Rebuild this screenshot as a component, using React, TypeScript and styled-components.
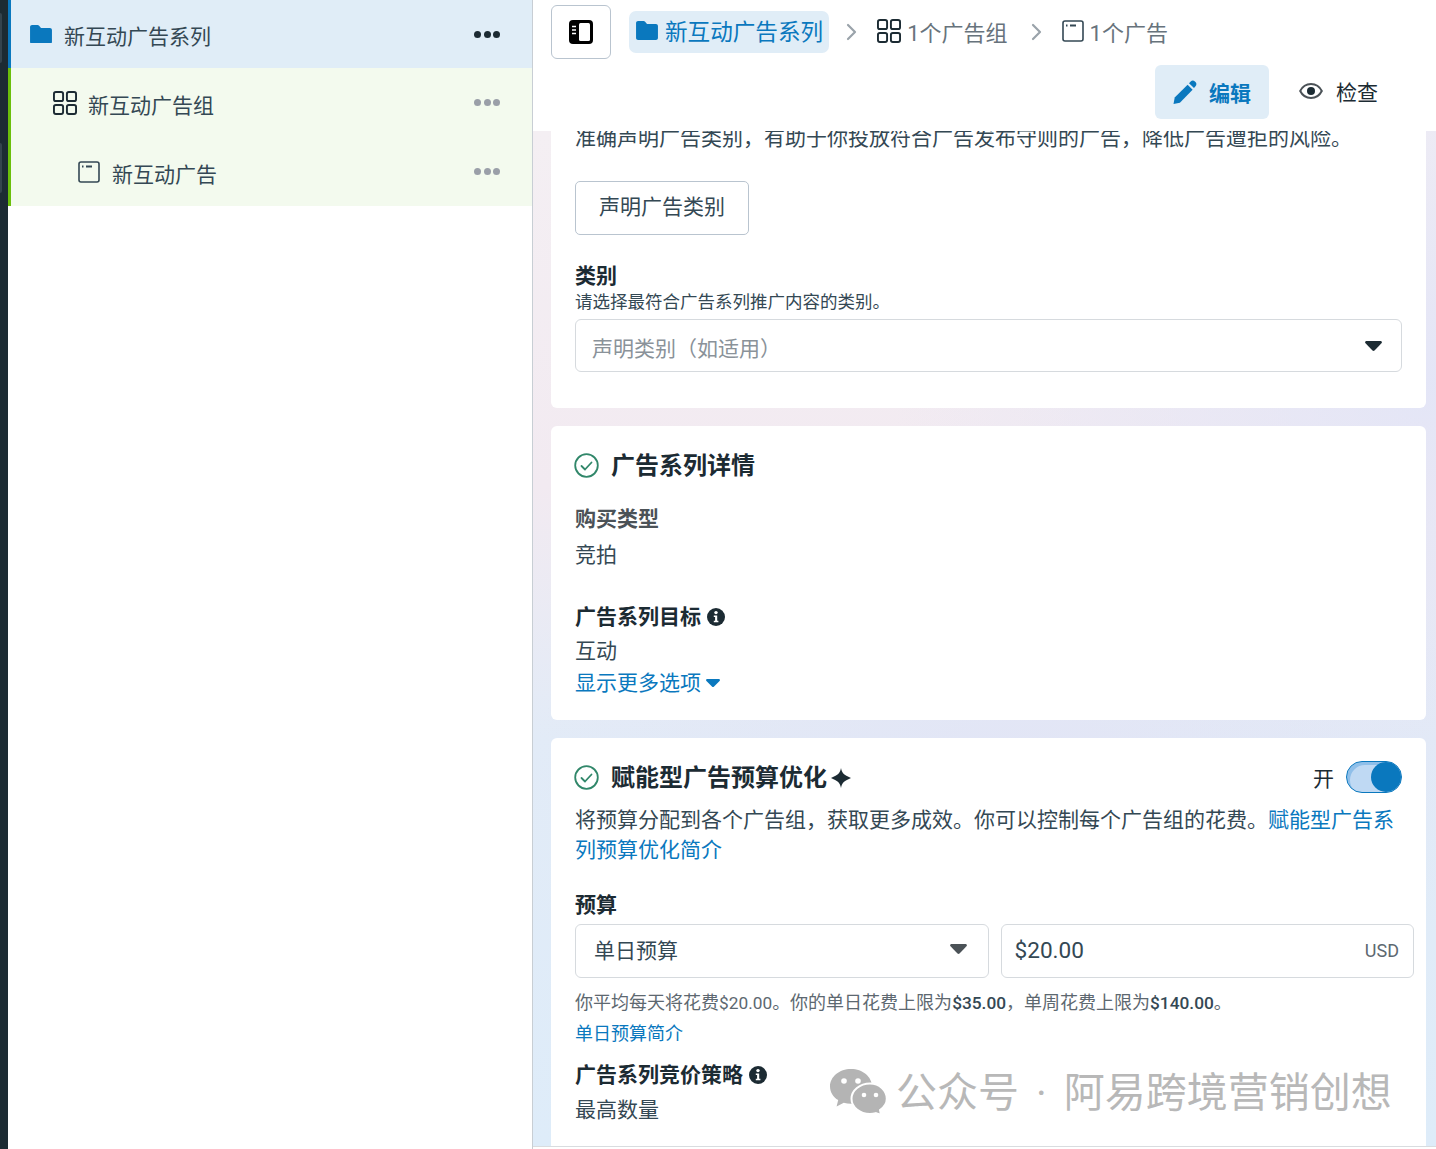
import React from "react";
import styled, { createGlobalStyle } from "styled-components";

const GlobalStyle = createGlobalStyle`
	html, body {
		margin: 0;
		padding: 0;
		background: #fff;
	}
	body {
		font-family: Roboto, "Noto Sans CJK SC", sans-serif;
		color: #1c2b33;
	}
	* {
		box-sizing: border-box;
	}
`;

const Page = styled.div`
	position: relative;
	display: flex;
	width: 1436px;
	height: 1149px;
	overflow: hidden;
	background: #fff;
`;

const Rail = styled.div`
	width: 8px;
	flex: none;
	background: #1c2b33;
	padding-top: 13px;
	display: flex;
	flex-direction: column;
	gap: 80px;
`;

const RailTab = styled.div`
	width: 2px;
	height: 50px;
	border-radius: 0 3px 3px 0;
	background: #34444e;
`;

const Sidebar = styled.aside`
	width: 525px;
	flex: none;
	border-right: 1px solid #c8ced4;
`;

const TreeRow = styled.div<{ $level: number }>`
	height: ${(p) => (p.$level === 0 ? 68 : 69)}px;
	display: flex;
	align-items: center;
	padding-left: ${(p) => 18 + p.$level * 24}px;
	padding-right: 32px;
	border-left: 3px solid ${(p) => (p.$level === 0 ? "#0a78be" : "#6abf0b")};
	background: ${(p) => (p.$level === 0 ? "#e0edf7" : "#f3faee")};
`;

const TreeIcon = styled.span`
	width: 24px;
	height: 24px;
	flex: none;
	display: flex;
	align-items: center;
	justify-content: center;
`;

const TreeLabel = styled.span`
	flex: 1;
	margin: 6px 0 0 11px;
	font-size: 21px;
	line-height: 28px;
	color: #344854;
`;

const Dots = styled.span<{ $dark?: boolean }>`
	display: flex;
	gap: 2.5px;
	i {
		width: 7px;
		height: 7px;
		border-radius: 50%;
		background: ${(p) => (p.$dark ? "#1c2b33" : "#9a9fa8")};
	}
`;

const Main = styled.main`
	flex: 1;
	min-width: 0;
	display: flex;
	flex-direction: column;
`;

const Header = styled.header`
	height: 131px;
	flex: none;
	padding: 5px 18px 0;
	position: relative;
	z-index: 1;
	background: #fff;
`;

const CrumbRow = styled.div`
	display: flex;
	align-items: center;
	height: 54px;
`;

const PanelButton = styled.button`
	width: 60px;
	height: 54px;
	flex: none;
	display: flex;
	align-items: center;
	justify-content: center;
	margin-right: 18px;
	padding: 0;
	background: #fff;
	border: 1px solid #b9c4cf;
	border-radius: 6px;
`;

const Crumb = styled.div<{ $active?: boolean }>`
	height: 42px;
	display: flex;
	align-items: center;
	gap: ${(p) => (p.$active ? 7 : 6)}px;
	padding: 0 6px 3px ${(p) => (p.$active ? 7 : 0)}px;
	border-radius: 7px;
	font-size: ${(p) => (p.$active ? 22.6 : 22)}px;
	color: ${(p) => (p.$active ? "#0a78be" : "#67737c")};
	background: ${(p) => (p.$active ? "#e0edf7" : "transparent")};
`;

const CrumbArrow = styled.span`
	width: 48px;
	flex: none;
	display: flex;
	padding-left: 17px;
`;

const ActionRow = styled.div`
	display: flex;
	justify-content: flex-end;
	align-items: center;
	margin: 6px 40px 0 0;
`;

const ActionButton = styled.div<{ $active?: boolean }>`
	height: 54px;
	display: flex;
	align-items: center;
	gap: ${(p) => (p.$active ? 12 : 13)}px;
	padding: ${(p) => (p.$active ? "0 18px" : "0 0 2px 30px")};
	border-radius: 6px;
	font-size: 21px;
	font-weight: ${(p) => (p.$active ? 700 : 400)};
	color: ${(p) => (p.$active ? "#0a78be" : "#1c2b33")};
	background: ${(p) => (p.$active ? "#e0edf7" : "transparent")};
`;

const Scroller = styled.div`
	flex: 1;
	min-height: 0;
	overflow: hidden;
	padding: 0 10px 0 18px;
	display: flex;
	flex-direction: column;
	gap: 18px;
	background:
		radial-gradient(ellipse 60% 45% at 100% 25%, rgba(226, 229, 247, 0.9), rgba(226, 229, 247, 0)),
		radial-gradient(ellipse 55% 25% at 55% 62%, rgba(226, 228, 245, 0.85), rgba(226, 228, 245, 0)),
		linear-gradient(180deg, #f4eff3 0%, #f2eaf1 35%, #e2ebf7 60%, #deecf9 100%);
`;

const Footer = styled.div`
	height: 3px;
	flex: none;
	background: #fff;
	border-top: 1px solid #d9dcdf;
`;

const Card = styled.section<{ $offset?: number; $bottom?: number }>`
	flex: none;
	background: #fff;
	border-radius: 6px;
	padding: 25px 24px ${(p) => p.$bottom ?? 24}px;
	margin-top: ${(p) => p.$offset ?? 0}px;
`;

const Body = styled.div<{ $top?: number }>`
	font-size: 21px;
	line-height: 26px;
	color: #344854;
	margin-top: ${(p) => p.$top ?? 0}px;
`;

const Label = styled.div<{ $top?: number; $muted?: boolean }>`
	display: flex;
	align-items: center;
	gap: 6px;
	font-size: 21px;
	line-height: 26px;
	font-weight: 700;
	color: ${(p) => (p.$muted ? "#4b5257" : "#1c2b33")};
	margin-top: ${(p) => p.$top ?? 0}px;
`;

const Hint = styled.div`
	font-size: 17.5px;
	line-height: 22px;
	margin-top: 2px;
	color: #344854;
`;

const OutlineButton = styled.button`
	display: block;
	width: 174px;
	height: 54px;
	margin-top: 30px;
	padding: 0 0 7px;
	background: #fff;
	border: 1px solid #b9c4cf;
	border-radius: 5px;
	font: inherit;
	font-size: 21px;
	color: #344854;
`;

const Select = styled.div<{ $placeholder?: boolean; $top?: number }>`
	height: ${(p) => (p.$placeholder ? 53 : 54)}px;
	display: flex;
	align-items: center;
	justify-content: space-between;
	padding: ${(p) => (p.$placeholder ? "2px 19px 0 16px" : "0 21px 4px 18px")};
	margin-top: ${(p) => p.$top ?? 0}px;
	border: 1px solid #d6dade;
	border-radius: 6px;
	font-size: 21px;
	color: ${(p) => (p.$placeholder ? "#8a9299" : "#344854")};
`;

const CardHead = styled.div`
	display: flex;
	align-items: center;
	height: 30px;
	> svg {
		margin-top: -2px;
		margin-left: -1px;
	}
`;

const CardTitle = styled.h2`
	margin: 0 0 0 12px;
	font-size: 24px;
	line-height: 30px;
	font-weight: 700;
	color: #1c2b33;
	display: flex;
	align-items: center;
	gap: 4px;
`;

const ToggleWrap = styled.div`
	margin: -2px 0 0 auto;
	display: flex;
	align-items: center;
	gap: 12px;
	font-size: 21px;
`;

const Toggle = styled.div`
	width: 56px;
	height: 32px;
	display: flex;
	justify-content: flex-end;
	border-radius: 16px;
	border: 1px solid #0a78be;
	background: #bfd9f3;
	box-shadow: inset 3px 3px 0 #8fbfe9;
	span {
		width: 30px;
		height: 30px;
		border-radius: 50%;
		background: #0a78be;
	}
`;

const Link = styled.a`
	color: #0a78be;
	text-decoration: none;
`;

const Paragraph = styled.p`
	margin: 12px 0 0;
	font-size: 21px;
	line-height: 30px;
	color: #344854;
`;

const MoreLink = styled(Link)`
	display: flex;
	align-items: center;
	gap: 5px;
	font-size: 21px;
	line-height: 26px;
	margin-top: 6px;
`;

const BudgetRow = styled.div`
	display: grid;
	grid-template-columns: 1fr 1fr;
	gap: 12px;
	margin: 6px -12px 0 0;
`;

const Amount = styled.div`
	height: 54px;
	display: flex;
	align-items: center;
	justify-content: space-between;
	padding: 0 14px 2px 13px;
	border: 1px solid #d6dade;
	border-radius: 6px;
	font-size: 22.6px;
	color: #344854;
	small {
		font-size: 18px;
		color: #5d6870;
	}
`;

const Note = styled.div`
	font-size: 18px;
	line-height: 22px;
	margin-top: 14px;
	color: #5d6870;
`;

const Money = styled.span<{ $strong?: boolean }>`
	font-size: 17.3px;
	font-weight: ${(p) => (p.$strong ? 500 : 400)};
	color: ${(p) => (p.$strong ? "#344854" : "inherit")};
`;

const SmallLink = styled(Link)`
	display: block;
	font-size: 18px;
	line-height: 22px;
	margin-top: 9px;
`;

const Watermark = styled.div`
	position: absolute;
	left: 830px;
	top: 1067px;
	display: flex;
	align-items: center;
	font-size: 41px;
	line-height: 52px;
	color: #b8b8b8;
	pointer-events: none;
	svg {
		margin: -2px 9px 0 0;
	}
	span {
		margin: 0 17px;
	}
`;

const FolderIcon = ({ size = 22 }: { size?: number }) => (
	<svg width={size} height={size * 0.86} viewBox="0 0 22 19" fill="#0a78be">
		<path d="M2 0h5.6c.6 0 1.1.3 1.5.7L11 3h9c1.1 0 2 .9 2 2v12c0 1.1-.9 2-2 2H2c-1.1 0-2-.9-2-2V2C0 .9.9 0 2 0z" />
	</svg>
);

const GroupIcon = ({ size = 24 }: { size?: number }) => (
	<svg width={size} height={size} viewBox="0 0 25 25" fill="none" stroke="#1c2b33" strokeWidth="2">
		<rect x="1" y="1" width="9.5" height="9.5" rx="2" />
		<rect x="14.5" y="1" width="9.5" height="9.5" rx="2" />
		<rect x="1" y="14.5" width="9.5" height="9.5" rx="2" />
		<rect x="14.5" y="14.5" width="9.5" height="9.5" rx="2" />
	</svg>
);

const AdIcon = ({ size = 22 }: { size?: number }) => (
	<svg width={size} height={size} viewBox="0 0 22 22" fill="none" stroke="#344854" strokeWidth="1.6">
		<rect x="1" y="1" width="20" height="20" rx="2" />
		<path d="M4 5.5h1.5M8 5.500h6" strokeWidth="1.8" />
	</svg>
);

const PanelIcon = () => (
	<svg width="24" height="24" viewBox="0 0 24 24">
		<rect x="0" y="0" width="24" height="24" rx="4" fill="#000" />
		<rect x="10" y="3" width="11" height="18" rx="1.5" fill="#fff" />
		<path d="M3 6.5h4M3 10h4M3 13.5h4" stroke="#fff" strokeWidth="1.6" />
	</svg>
);

const ChevronIcon = () => (
	<svg width="11" height="18" viewBox="0 0 11 18" fill="none" stroke="#9aa3aa" strokeWidth="2.2" strokeLinecap="round" strokeLinejoin="round">
		<path d="M2 2l7 7-7 7" />
	</svg>
);

const PencilIcon = () => (
	<svg width="24" height="24" viewBox="0 0 24 24" fill="#0a78be">
		<path d="M0.5 24l1.2-6.4L14.6 4.700l5 5L6.900 22.700 0.500 24z" />
		<path d="M16 3.300l1.700-1.800c1.200-1.200 3-1.200 4.200 0l.6.6c1.200 1.200 1.200 3 0 4.200L21 8.100 16 3.300z" />
	</svg>
);

const EyeIcon = () => (
	<svg width="24" height="18" viewBox="0 0 24 18" fill="none">
		<path d="M1.200 9C3.600 4.200 7.400 2 12 2s8.400 2.200 10.800 7c-2.400 4.800-6.200 7-10.800 7S3.600 13.800 1.200 9z" stroke="#4b5257" strokeWidth="2" />
		<circle cx="12" cy="9" r="4" fill="#1c2b33" />
	</svg>
);

const CheckCircle = () => (
	<svg width="25" height="25" viewBox="0 0 25 25" fill="none">
		<circle cx="12.500" cy="12.500" r="11.300" stroke="#31876a" strokeWidth="1.800" />
		<path d="M7.500 13l3.500 3.500 6.500-7" stroke="#31876a" strokeWidth="1.800" strokeLinecap="round" strokeLinejoin="round" />
	</svg>
);

const InfoIcon = () => (
	<svg width="18" height="18" viewBox="0 0 18 18">
		<circle cx="9" cy="9" r="9" fill="#1c2b33" />
		<circle cx="9" cy="4.600" r="1.700" fill="#fff" />
		<path d="M6.800 7.500h3.400v5.300h1.200v1.500H6.800v-1.500h1.300V9H6.800z" fill="#fff" />
	</svg>
);

const SparkIcon = () => (
	<svg width="20" height="20" viewBox="0 0 20 20" fill="#1c2b33">
		<path d="M10 0c1 5 2.500 6.800 10 10-7.500 3.200-9 5-10 10-1-5-2.500-6.800-10-10C7.500 6.800 9 5 10 0z" />
	</svg>
);

const Caret = ({ color = "#344854", width = 17 }: { color?: string; width?: number }) => (
	<svg width={width} height={width * 0.6} viewBox="0 0 17 10" fill={color}>
		<path d="M1.500 0h14c1.200 0 1.800 1.300 1 2.200l-7 7.200c-.6.600-1.400.600-2 0L.500 2.200C-.300 1.300.300 0 1.500 0z" />
	</svg>
);

const WechatIcon = () => (
	<svg width="57" height="46" viewBox="0 0 57 46" fill="#b4b4b4">
		<path d="M21 0C9.400 0 0 7.800 0 17.400c0 5.600 3.200 10.500 8.200 13.700L6.600 37.400l7.200-3.600c2.300.6 4.700 1 7.200 1 11.600 0 21-7.800 21-17.400S32.600 0 21 0z" />
		<circle cx="14" cy="12" r="2.800" fill="#fff" />
		<circle cx="28" cy="12" r="2.800" fill="#fff" />
		<path d="M40 14.500c-10.200 0-18.500 6.800-18.500 15.200S29.800 44.900 40 44.900c2 0 3.900-.3 5.700-.8l5.300 1.900-1-5c4.200-2.800 6.800-6.800 6.800-11.300 0-8.400-7.600-15.200-16.800-15.200z" stroke="#fff" strokeWidth="2" />
		<circle cx="34" cy="26" r="2.300" fill="#fff" />
		<circle cx="46" cy="26" r="2.300" fill="#fff" />
	</svg>
);

const treeRows = [
	{ level: 0, label: "新互动广告系列", icon: <FolderIcon /> },
	{ level: 1, label: "新互动广告组", icon: <GroupIcon /> },
	{ level: 2, label: "新互动广告", icon: <AdIcon /> },
];

function App() {
	return (
		<Page>
			<GlobalStyle />
			<Rail>
				<RailTab />
				<RailTab />
			</Rail>
			<Sidebar>
				{treeRows.map((row) => (
					<TreeRow key={row.label} $level={row.level}>
						<TreeIcon>{row.icon}</TreeIcon>
						<TreeLabel>{row.label}</TreeLabel>
						<Dots $dark={row.level === 0}>
							<i />
							<i />
							<i />
						</Dots>
					</TreeRow>
				))}
			</Sidebar>
			<Main>
				<Header>
					<CrumbRow>
						<PanelButton>
							<PanelIcon />
						</PanelButton>
						<Crumb $active>
							<FolderIcon />
							新互动广告系列
						</Crumb>
						<CrumbArrow>
							<ChevronIcon />
						</CrumbArrow>
						<Crumb>
							<GroupIcon />
							1个广告组
						</Crumb>
						<CrumbArrow>
							<ChevronIcon />
						</CrumbArrow>
						<Crumb>
							<AdIcon />
							1个广告
						</Crumb>
					</CrumbRow>
					<ActionRow>
						<ActionButton $active>
							<PencilIcon />
							编辑
						</ActionButton>
						<ActionButton>
							<EyeIcon />
							检查
						</ActionButton>
					</ActionRow>
				</Header>
				<Scroller>
					<Card $offset={-31} $bottom={36}>
						<Body>准确声明广告类别，有助于你投放符合广告发布守则的广告，降低广告遭拒的风险。</Body>
						<OutlineButton>声明广告类别</OutlineButton>
						<Label $top={28}>类别</Label>
						<Hint>请选择最符合广告系列推广内容的类别。</Hint>
						<Select $placeholder $top={6}>
							声明类别（如适用）
							<Caret color="#1c2b33" />
						</Select>
					</Card>
					<Card>
						<CardHead>
							<CheckCircle />
							<CardTitle>广告系列详情</CardTitle>
						</CardHead>
						<Label $top={25} $muted>
							购买类型
						</Label>
						<Body $top={10}>竞拍</Body>
						<Label $top={36}>
							广告系列目标
							<InfoIcon />
						</Label>
						<Body $top={8}>互动</Body>
						<MoreLink>
							显示更多选项
							<Caret color="#0a78be" width={14} />
						</MoreLink>
					</Card>
					<Card $bottom={80}>
						<CardHead>
							<CheckCircle />
							<CardTitle>
								赋能型广告预算优化
								<SparkIcon />
							</CardTitle>
							<ToggleWrap>
								开
								<Toggle>
									<span />
								</Toggle>
							</ToggleWrap>
						</CardHead>
						<Paragraph>
							将预算分配到各个广告组，获取更多成效。你可以控制每个广告组的花费。
							<Link>赋能型广告系列预算优化简介</Link>
						</Paragraph>
						<Label $top={27}>预算</Label>
						<BudgetRow>
							<Select>
								单日预算
								<Caret color="#4b5257" />
							</Select>
							<Amount>
								$20.00
								<small>USD</small>
							</Amount>
						</BudgetRow>
						<Note>
							你平均每天将花费<Money>$20.00</Money>。你的单日花费上限为<Money $strong>$35.00</Money>，单周花费上限为<Money $strong>$140.00</Money>。
						</Note>
						<SmallLink>单日预算简介</SmallLink>
						<Label $top={17}>
							广告系列竞价策略
							<InfoIcon />
						</Label>
						<Body $top={9}>最高数量</Body>
					</Card>
				</Scroller>
				<Footer />
			</Main>
			<Watermark>
				<WechatIcon />
				公众号<span>·</span>阿易跨境营销创想
			</Watermark>
		</Page>
	);
}

export default App;
